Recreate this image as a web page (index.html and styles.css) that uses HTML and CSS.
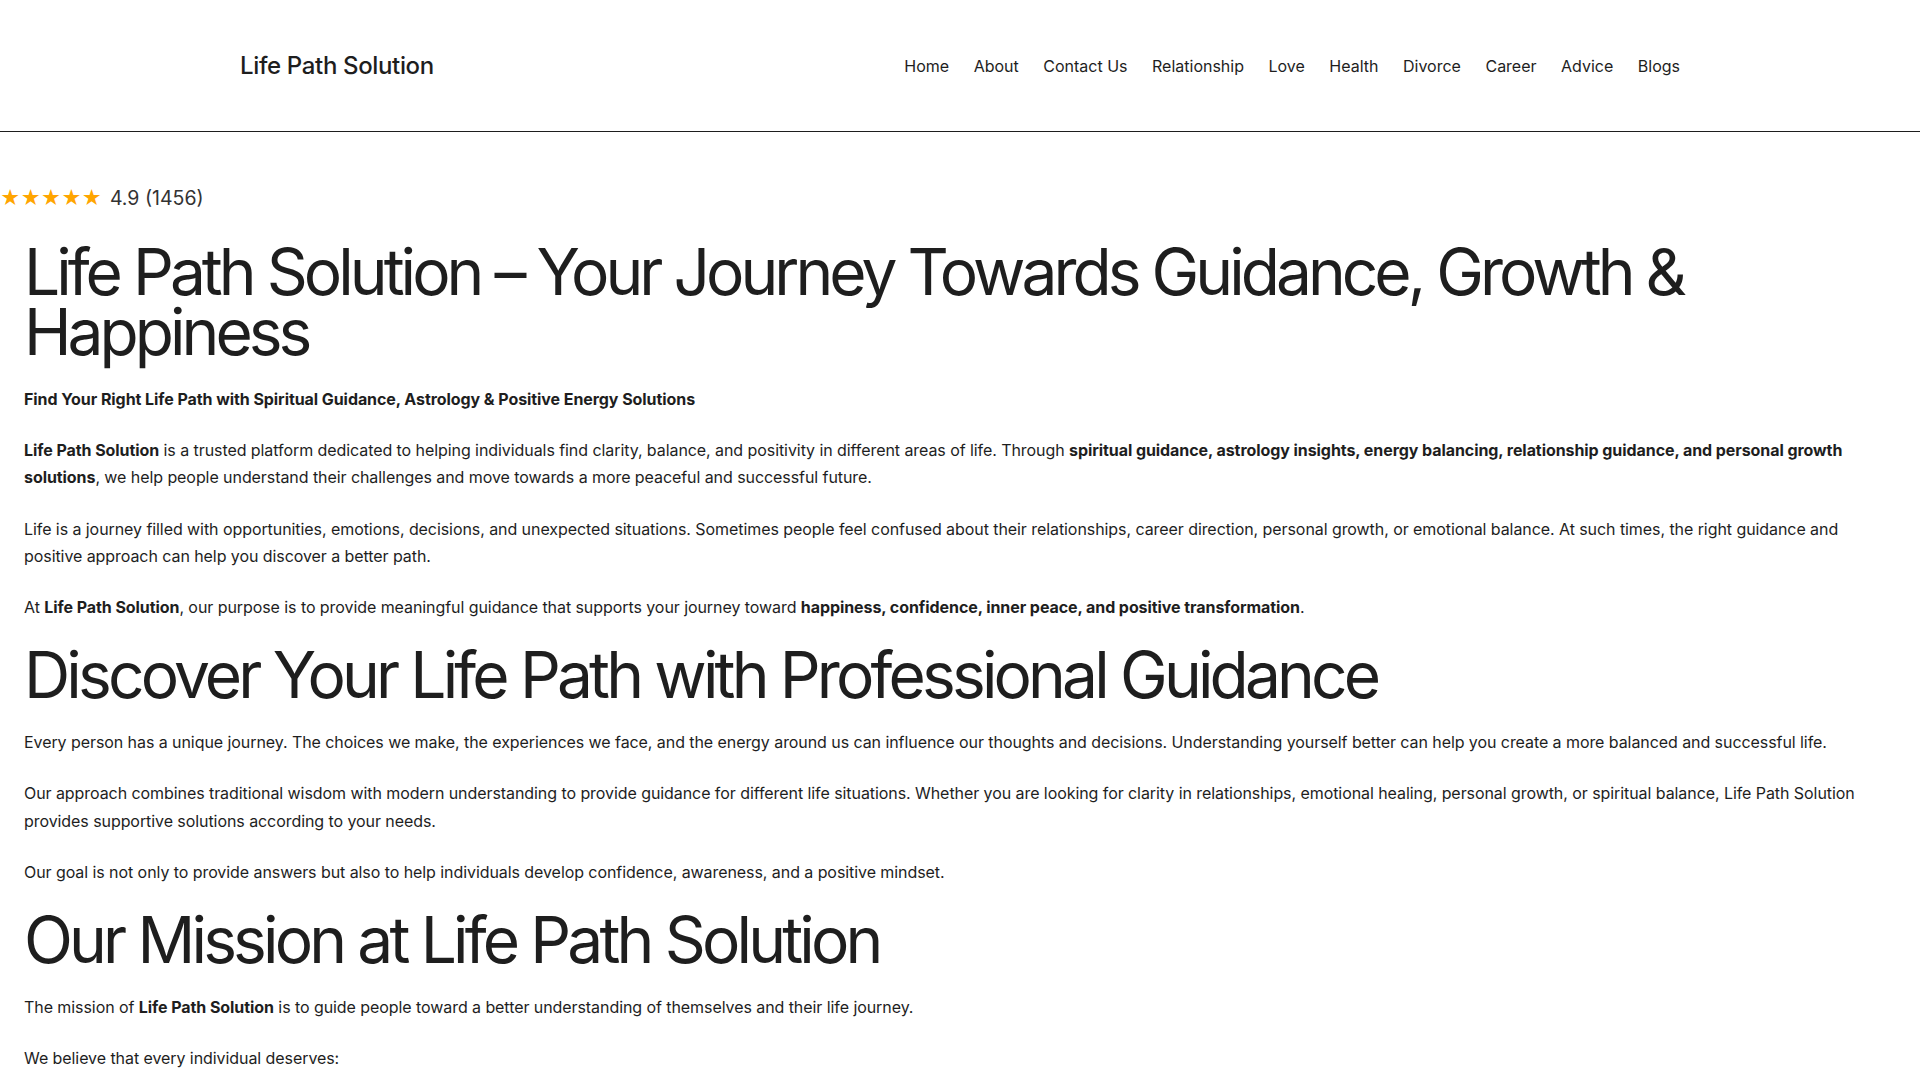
FILE: index.html
```html
<!DOCTYPE html>
<html lang="en">
<head>
<meta charset="utf-8">
<title>Life Path Solution – Your Journey Towards Guidance, Growth &amp; Happiness</title>
<link rel="stylesheet" href="styles.css">
</head>
<body>
<header class="site-header">
  <div class="header-inner">
    <a class="site-title" href="#">Life Path Solution</a>
    <nav class="main-nav">
      <a href="#">Home</a>
      <a href="#">About</a>
      <a href="#">Contact Us</a>
      <a href="#">Relationship</a>
      <a href="#">Love</a>
      <a href="#">Health</a>
      <a href="#">Divorce</a>
      <a href="#">Career</a>
      <a href="#">Advice</a>
      <a href="#">Blogs</a>
    </nav>
  </div>
</header>

<main class="page">
  <div class="rating">
    <span class="stars">★★★★★</span>
    <span class="score">4.9 (1456)</span>
  </div>

  <article class="entry">
    <h1>Life Path Solution – Your Journey Towards Guidance, Growth &amp; Happiness</h1>

    <p><strong>Find Your Right Life Path with Spiritual Guidance, Astrology &amp; Positive Energy Solutions</strong></p>

    <p><strong>Life Path Solution</strong> is a trusted platform dedicated to helping individuals find clarity, balance, and positivity in different areas of life. Through <strong>spiritual guidance, astrology insights, energy balancing, relationship guidance, and personal growth solutions</strong>, we help people understand their challenges and move towards a more peaceful and successful future.</p>

    <p>Life is a journey filled with opportunities, emotions, decisions, and unexpected situations. Sometimes people feel confused about their relationships, career direction, personal growth, or emotional balance. At such times, the right guidance and positive approach can help you discover a better path.</p>

    <p>At <strong>Life Path Solution</strong>, our purpose is to provide meaningful guidance that supports your journey toward <strong>happiness, confidence, inner peace, and positive transformation</strong>.</p>

    <h2>Discover Your Life Path with Professional Guidance</h2>

    <p>Every person has a unique journey. The choices we make, the experiences we face, and the energy around us can influence our thoughts and decisions. Understanding yourself better can help you create a more balanced and successful life.</p>

    <p>Our approach combines traditional wisdom with modern understanding to provide guidance for different life situations. Whether you are looking for clarity in relationships, emotional healing, personal growth, or spiritual balance, Life Path Solution provides supportive solutions according to your needs.</p>

    <p>Our goal is not only to provide answers but also to help individuals develop confidence, awareness, and a positive mindset.</p>

    <h2>Our Mission at Life Path Solution</h2>

    <p>The mission of <strong>Life Path Solution</strong> is to guide people toward a better understanding of themselves and their life journey.</p>

    <p>We believe that every individual deserves:</p>
  </article>
</main>
</body>
</html>
```

FILE: styles.css
```css
* {
  box-sizing: border-box;
}

html,
body {
  margin: 0;
  padding: 0;
  background: #ffffff;
}

body {
  font-family: Inter, "Noto Sans", "Liberation Sans", sans-serif;
  color: #1e1e1e;
  font-size: 16px;
  line-height: 1.7;
}

a {
  color: inherit;
  text-decoration: none;
}

/* ---------- header ---------- */
.site-header {
  height: 132px;
  border-bottom: 1px solid #1e1e1e;
}

.header-inner {
  width: 1440px;
  height: 100%;
  margin: 0 auto;
  display: flex;
  align-items: center;
  justify-content: space-between;
}

.site-title {
  font-size: 24px;
  font-weight: 500;
  line-height: 1;
  letter-spacing: -0.35px;
}

.main-nav {
  display: flex;
  gap: 24.5px;
  font-size: 16px;
  line-height: 1;
}

/* ---------- content ---------- */
.rating {
  display: flex;
  align-items: center;
  gap: 8px;
  margin: 54px 0 32px;
  line-height: 24px;
}

.stars {
  color: #ffa500;
  font-size: 19.5px;
  letter-spacing: 0;
}

.score {
  font-size: 19.5px;
  color: #333333;
}

.entry {
  padding: 0 40px 0 24px;
}

.entry h1,
.entry h2 {
  font-size: 64px;
  font-weight: 400;
  line-height: 60px;
  letter-spacing: -0.062em;
  margin: 24px 0;
}

.entry h1 {
  margin-top: 0;
}

.entry h2 {
  letter-spacing: -0.06em;
}

.entry p {
  margin: 24px 0;
  line-height: 1.7;
  letter-spacing: -0.07px;
}

.entry strong {
  font-weight: 700;
}
```
